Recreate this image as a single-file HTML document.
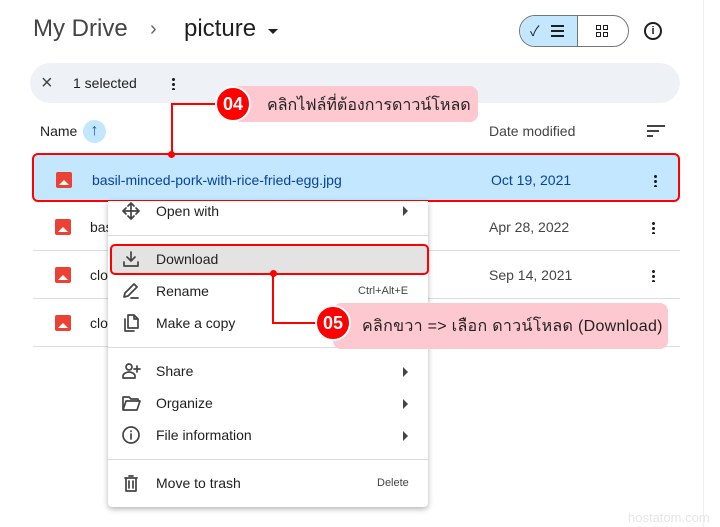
<!DOCTYPE html>
<html><head><meta charset="utf-8"><style>
*{margin:0;padding:0;box-sizing:border-box}
body{width:720px;height:527px;background:#fff;position:relative;overflow:hidden;font-family:"Liberation Sans","Noto Sans CJK SC",sans-serif;color:#1f1f1f}
.a{position:absolute}
.t{position:absolute;white-space:nowrap}
.sep{position:absolute;height:1px;background:#dadce0}
.mi{position:absolute;left:156px;font-size:14px;color:#1f1f1f;white-space:nowrap}
.arr{position:absolute;left:403px;width:0;height:0;border-top:5px solid transparent;border-bottom:5px solid transparent;border-left:5px solid #444}
.img{position:absolute;width:16px;height:16px;background:#ea4335;border-radius:2px}
.img:after{content:"";position:absolute;left:3px;bottom:3px;border-left:5px solid transparent;border-right:5px solid transparent;border-bottom:5px solid #fff}
.dots{position:absolute;width:3px;height:13px;background:radial-gradient(circle,#1f1f1f 1.4px,transparent 1.6px) 0 0/3px 5px repeat-y}
svg.ic{position:absolute;left:121px;width:20px;height:20px;fill:none;stroke:#444;stroke-width:1.7;stroke-linecap:round;stroke-linejoin:round}
</style></head><body>
<div class="a" style="left:703px;top:0;width:1px;height:527px;background:#eceef1"></div>
<div class="t" style="left:33px;top:15px;font-size:24px;color:#444">My Drive</div>
<div class="t" style="left:150px;top:18px;font-size:20px;color:#5f6368">›</div>
<div class="t" style="left:184px;top:15px;font-size:24px;color:#1f1f1f">picture</div>
<div class="a" style="left:268px;top:29px;border-left:5px solid transparent;border-right:5px solid transparent;border-top:5px solid #1f1f1f"></div>
<div class="a" style="left:519px;top:15px;width:110px;height:32px;border:1px solid #747775;border-radius:16px;overflow:hidden">
<div class="a" style="left:0;top:0;width:58px;height:30px;background:#c2e7ff;border-right:1px solid #747775"></div>
<div class="t" style="left:10px;top:5px;font-size:14px;color:#1f1f1f">✓</div>
<div class="a" style="left:31px;top:9px;width:13px;height:12px;border-top:2px solid #1f1f1f;border-bottom:2px solid #1f1f1f"><div class="a" style="left:0;top:3px;width:13px;height:2px;background:#1f1f1f"></div></div>
<div class="a" style="left:76px;top:9px;width:5px;height:5px;border:1.5px solid #1f1f1f"></div><div class="a" style="left:83px;top:9px;width:5px;height:5px;border:1.5px solid #1f1f1f"></div>
<div class="a" style="left:76px;top:16px;width:5px;height:5px;border:1.5px solid #1f1f1f"></div><div class="a" style="left:83px;top:16px;width:5px;height:5px;border:1.5px solid #1f1f1f"></div>
</div>
<div class="a" style="left:644px;top:22px;width:18px;height:18px;border:2px solid #1f1f1f;border-radius:50%;font-size:11px;font-weight:bold;text-align:center;line-height:14px">i</div>
<div class="a" style="left:30px;top:63px;width:650px;height:40px;background:#eef2f7;border-radius:20px"></div>
<div class="t" style="left:41px;top:72px;font-size:20px;color:#444">×</div>
<div class="t" style="left:73px;top:75px;font-size:14px">1 selected</div>
<div class="dots" style="left:172px;top:77px"></div>
<div class="t" style="left:40px;top:123px;font-size:14px;font-weight:500">Name</div>
<div class="a" style="left:83px;top:120px;width:23px;height:23px;border-radius:50%;background:#c2e7ff;text-align:center;font-size:16px;line-height:22px;color:#0b57d0;font-weight:bold">↑</div>
<div class="t" style="left:489px;top:123px;font-size:14px;color:#444">Date modified</div>
<div class="a" style="left:647px;top:125px;width:18px;height:2px;background:#444"></div>
<div class="a" style="left:647px;top:130px;width:12px;height:2px;background:#444"></div>
<div class="a" style="left:647px;top:135px;width:6px;height:2px;background:#444"></div>
<div class="a" style="left:32px;top:153px;width:648px;height:49px;background:#c2e7ff;border:2px solid #f00;border-radius:6px"></div>
<div class="img" style="left:56px;top:172px"></div>
<div class="t" style="left:92px;top:172px;font-size:14px;color:#0842a0">basil-minced-pork-with-rice-fried-egg.jpg</div>
<div class="t" style="left:491px;top:172px;font-size:14px;color:#0842a0">Oct 19, 2021</div>
<div class="dots" style="left:654px;top:174px"></div>
<div class="img" style="left:55px;top:219px"></div><div class="t" style="left:90px;top:219px;font-size:14px">basil</div>
<div class="t" style="left:489px;top:219px;font-size:14px;color:#444">Apr 28, 2022</div><div class="dots" style="left:652px;top:221px"></div>
<div class="sep" style="left:33px;top:250px;width:647px"></div>
<div class="img" style="left:55px;top:267px"></div><div class="t" style="left:90px;top:267px;font-size:14px">clo</div>
<div class="t" style="left:489px;top:267px;font-size:14px;color:#444">Sep 14, 2021</div><div class="dots" style="left:652px;top:269px"></div>
<div class="sep" style="left:33px;top:298px;width:647px"></div>
<div class="img" style="left:55px;top:315px"></div><div class="t" style="left:90px;top:315px;font-size:14px">clo</div>
<div class="sep" style="left:33px;top:346px;width:647px"></div>
<!-- menu -->
<div class="a" style="left:108px;top:201px;width:320px;height:306px;background:#fff;box-shadow:0 2px 6px rgba(0,0,0,.3);border-radius:0 0 4px 4px"></div>
<svg class="ic" style="top:201px" viewBox="0 0 20 20"><path d="M10 2v16M2 10h16M7 5l3-3 3 3M7 15l3 3 3-3M5 7l-3 3 3 3M15 7l3 3-3 3"/></svg>
<div class="mi" style="top:203px">Open with</div><div class="arr" style="top:206px"></div>
<div class="sep" style="left:108px;top:235px;width:320px"></div>
<div class="a" style="left:110px;top:244px;width:319px;height:31px;background:#e3e3e3;border:2px solid #f00;border-radius:5px"></div>
<svg class="ic" style="top:249px" viewBox="0 0 20 20"><path d="M10 3v9M6 8l4 4 4-4M3 13v4h14v-4"/></svg>
<div class="mi" style="top:251px">Download</div>
<svg class="ic" style="top:281px" viewBox="0 0 20 20"><path d="M3 16l1-4 9-9 3 3-9 9z M10 17h7"/></svg>
<div class="mi" style="top:283px">Rename</div><div class="t" style="left:358px;top:285px;font-size:11px;color:#444">Ctrl+Alt+E</div>
<svg class="ic" style="top:313px" viewBox="0 0 20 20"><path d="M7 2h6l4 4v9H7z M13 2v4h4 M4 6v12h9"/></svg>
<div class="mi" style="top:315px">Make a copy</div>
<div class="sep" style="left:108px;top:347px;width:320px"></div>
<svg class="ic" style="top:361px" viewBox="0 0 20 20"><circle cx="8" cy="6" r="3"/><path d="M2 17v-2c0-2 3-4 6-4s6 2 6 4v2z M16 5v6M13 8h6"/></svg>
<div class="mi" style="top:363px">Share</div><div class="arr" style="top:367px"></div>
<svg class="ic" style="top:393px" viewBox="0 0 20 20"><path d="M2 4h6l2 2h7v2H5l-3 9z M5 8h14l-3 9H2"/></svg>
<div class="mi" style="top:395px">Organize</div><div class="arr" style="top:399px"></div>
<svg class="ic" style="top:425px" viewBox="0 0 20 20"><circle cx="10" cy="10" r="8"/><path d="M10 9v5M10 6v.5"/></svg>
<div class="mi" style="top:427px">File information</div><div class="arr" style="top:431px"></div>
<div class="sep" style="left:108px;top:459px;width:320px"></div>
<svg class="ic" style="top:473px" viewBox="0 0 20 20"><path d="M4 5h12M8 3h4M5 5v13h10V5M8 8v7M12 8v7"/></svg>
<div class="mi" style="top:475px">Move to trash</div><div class="t" style="left:377px;top:477px;font-size:11px;color:#444">Delete</div>
<!-- callout 04 -->
<div class="a" style="left:172px;top:103px;width:46px;height:2px;background:#f00"></div>
<div class="a" style="left:171px;top:103px;width:2px;height:51px;background:#f00"></div>
<div class="a" style="left:168px;top:151px;width:7px;height:7px;border-radius:50%;background:#f00"></div>
<div class="a" style="left:233px;top:86px;width:245px;height:36px;background:#fdc8cf;border-radius:0 8px 8px 8px"></div>
<div class="a" style="left:215px;top:86px;width:36px;height:36px;border-radius:50%;background:#f00;border:2px solid #fff;color:#fff;font-size:18px;font-weight:bold;text-align:center;line-height:32px">04</div>
<div class="t" style="left:267px;top:93px;font-size:16px;color:#222">คลิกไฟล์ที่ต้องการดาวน์โหลด</div>
<!-- callout 05 -->
<div class="a" style="left:270px;top:270px;width:7px;height:7px;border-radius:50%;background:#f00"></div>
<div class="a" style="left:272px;top:273px;width:2px;height:51px;background:#f00"></div>
<div class="a" style="left:272px;top:322px;width:46px;height:2px;background:#f00"></div>
<div class="a" style="left:333px;top:303px;width:335px;height:46px;background:#fdc8cf;border-radius:8px"></div>
<div class="a" style="left:315px;top:305px;width:36px;height:36px;border-radius:50%;background:#f00;border:2px solid #fff;color:#fff;font-size:18px;font-weight:bold;text-align:center;line-height:32px">05</div>
<div class="t" style="left:362px;top:314px;font-size:16px;color:#222;letter-spacing:0.3px">คลิกขวา =&gt; เลือก ดาวน์โหลด (Download)</div>
<div class="t" style="left:628px;top:510px;font-size:13px;color:#e6e6e6">hostatom.com</div>
</body></html>
